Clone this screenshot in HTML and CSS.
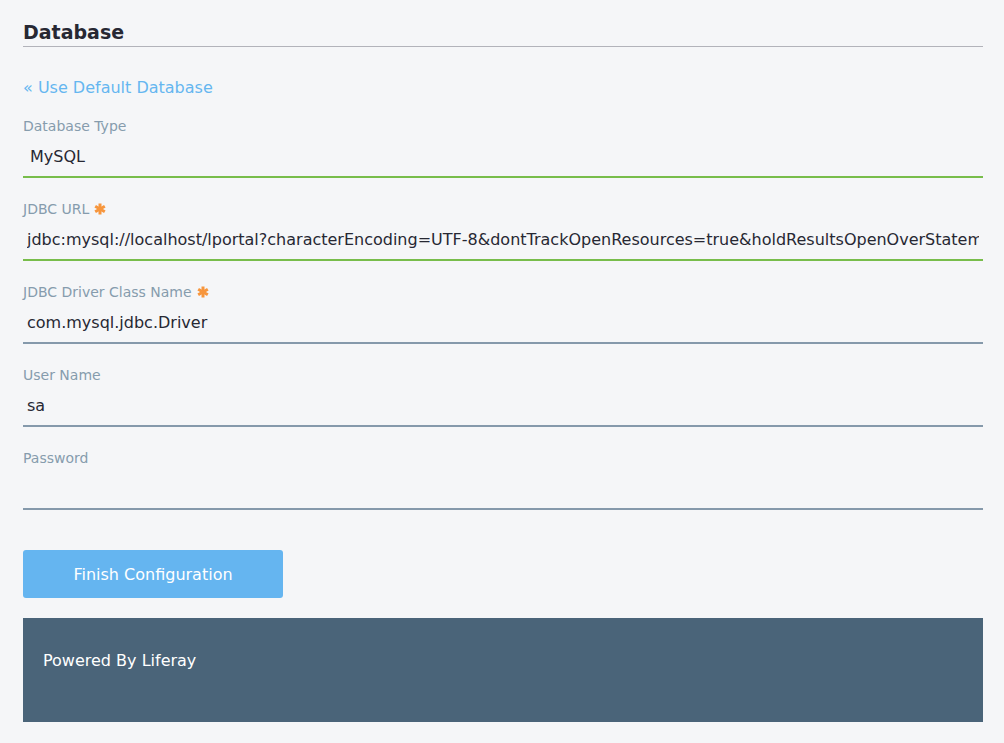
FILE: index.html
```html
<!DOCTYPE html>
<html lang="en">
<head>
<meta charset="utf-8">
<title>Database</title>
<link rel="stylesheet" href="styles.css">
</head>
<body>
<div class="page">
  <h2 class="section-title">Database</h2>
  <a class="default-link" href="#">« Use Default Database</a>
  <form class="db-form">
    <div class="field">
      <label class="field-label">Database Type</label>
      <div class="field-input select valid">MySQL</div>
    </div>
    <div class="field">
      <label class="field-label">JDBC URL <svg class="req" viewBox="0 0 12 12" width="12" height="12"><g stroke="currentColor" stroke-width="3" stroke-linecap="butt"><line x1="6" y1="0.5" x2="6" y2="11.5"/><line x1="1.2" y1="3.2" x2="10.8" y2="8.8"/><line x1="1.2" y1="8.8" x2="10.8" y2="3.2"/></g></svg></label>
      <input class="field-input valid" type="text" value="jdbc:mysql://localhost/lportal?characterEncoding=UTF-8&amp;dontTrackOpenResources=true&amp;holdResultsOpenOverStatementClose=true&amp;serverTimezone=GMT&amp;useFastDateParsing=false&amp;useUnicode=true">
    </div>
    <div class="field">
      <label class="field-label">JDBC Driver Class Name <svg class="req" viewBox="0 0 12 12" width="12" height="12"><g stroke="currentColor" stroke-width="3" stroke-linecap="butt"><line x1="6" y1="0.5" x2="6" y2="11.5"/><line x1="1.2" y1="3.2" x2="10.8" y2="8.8"/><line x1="1.2" y1="8.8" x2="10.8" y2="3.2"/></g></svg></label>
      <input class="field-input" type="text" value="com.mysql.jdbc.Driver">
    </div>
    <div class="field">
      <label class="field-label">User Name</label>
      <input class="field-input" type="text" value="sa">
    </div>
    <div class="field">
      <label class="field-label">Password</label>
      <input class="field-input" type="password" value="">
    </div>
    <button class="btn-primary" type="button">Finish Configuration</button>
  </form>
  <footer class="footer">Powered By Liferay</footer>
</div>
</body>
</html>
```

FILE: styles.css
```css
html, body {
  margin: 0;
  padding: 0;
  background: #f5f6f8;
}
body {
  font-family: "DejaVu Sans", "Liberation Sans", sans-serif;
  color: #272833;
}
.page {
  padding: 20px 21px 21px 23px;
  display: flex;
  flex-direction: column;
}
.section-title {
  margin: 0;
  font-size: 19px;
  line-height: 24px;
  font-weight: bold;
  color: #272833;
  padding-bottom: 2px;
  border-bottom: 1px solid #b2b3ba;
}
.default-link {
  margin-top: 29px;
  align-self: flex-start;
  font-size: 16px;
  line-height: 24px;
  color: #65b6f0;
  text-decoration: none;
}
.db-form {
  display: flex;
  flex-direction: column;
  margin-top: 16px;
}
.field {
  display: flex;
  flex-direction: column;
  margin-bottom: 21px;
}
.field-label {
  font-size: 14px;
  line-height: 20px;
  color: #869cad;
  display: flex;
  align-items: center;
  gap: 5px;
}
.req {
  color: #f7963d;
  margin-top: -1px;
}
.field-input {
  box-sizing: border-box;
  height: 42px;
  width: 100%;
  margin: 0;
  padding: 0 4px;
  border: 0;
  border-bottom: 2px solid #8599ab;
  background: transparent;
  font-family: "DejaVu Sans", "Liberation Sans", sans-serif;
  font-size: 16px;
  color: #272833;
  outline: none;
}
.field-input.select {
  display: flex;
  align-items: center;
  padding-left: 7px;
}
.field-input.valid {
  border-bottom-color: #78bd4b;
}
.btn-primary {
  margin-top: 19px;
  align-self: flex-start;
  width: 260px;
  height: 48px;
  border: 0;
  border-radius: 3px;
  background: #65b5f0;
  color: #ffffff;
  font-family: "DejaVu Sans", "Liberation Sans", sans-serif;
  font-size: 16px;
  cursor: pointer;
}
.footer {
  margin-top: 20px;
  background: #4a6479;
  color: #ffffff;
  font-size: 16px;
  line-height: 24px;
  padding: 31px 20px 49px;
}
```
